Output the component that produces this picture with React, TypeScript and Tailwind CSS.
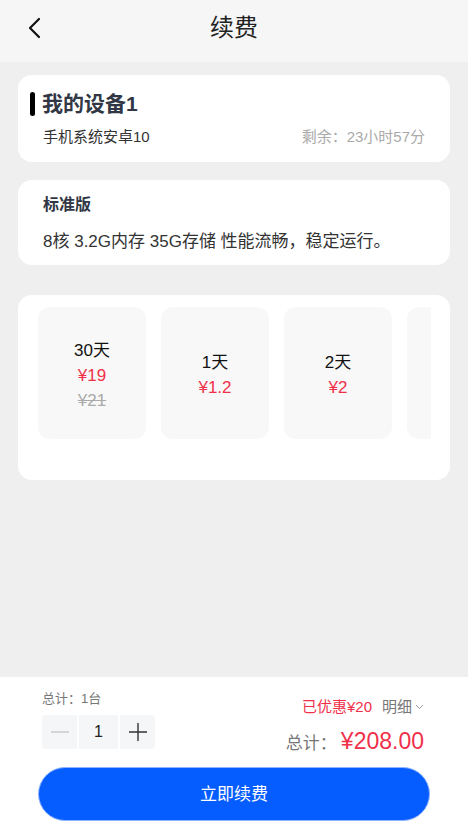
import React, { useState } from 'react';

interface Plan {
  days: string;
  price: string;
  original?: string;
}

const plans: Plan[] = [
  { days: '30天', price: '¥19', original: '¥21' },
  { days: '1天', price: '¥1.2' },
  { days: '2天', price: '¥2' },
];

const font = { fontFamily: '"Liberation Sans", "Noto Sans CJK SC", sans-serif' };

const App: React.FC = () => {
  const [count, setCount] = useState(1);

  return (
    <div className="w-[468px] h-[834px] bg-[#efefef] flex flex-col overflow-hidden" style={font}>
      {/* header */}
      <div className="h-[62px] bg-[#f6f6f6] flex items-center relative shrink-0">
        <button className="absolute left-[24px] top-[16px] w-[20px] h-[24px] flex items-center justify-center">
          <svg width="14" height="22" viewBox="0 0 14 22" fill="none">
            <path d="M12 2 L3 11 L12 20" stroke="#111" strokeWidth="2.2" strokeLinecap="round" strokeLinejoin="round" />
          </svg>
        </button>
        <h1 className="w-full text-center text-[24px] text-[#222] leading-none -mt-[6px]">续费</h1>
      </div>

      <div className="flex-1 px-[18px] pt-[13px] flex flex-col gap-[18px]">
        {/* device card */}
        <div className="bg-white rounded-[14px] h-[87px] pl-[12px] pr-[25px] pt-[15px]">
          <div className="flex items-center gap-[7px]">
            <span className="w-[5px] h-[24px] bg-black rounded-full" />
            <span className="text-[21px] font-bold text-[#313745] leading-[28px]">我的设备1</span>
          </div>
          <div className="flex justify-between items-center mt-[9px] pl-[13px] text-[15px] leading-[20px]">
            <span className="text-[#333]">手机系统安卓10</span>
            <span className="text-[#aaa]">剩余：23小时57分</span>
          </div>
        </div>

        {/* version card */}
        <div className="bg-white rounded-[14px] h-[85px] px-[25px] pt-[14px]">
          <div className="text-[16px] font-bold text-[#313745] leading-[22px]">标准版</div>
          <div className="text-[17px] text-[#333] leading-[22px] mt-[15px]">8核 3.2G内存 35G存储 性能流畅，稳定运行。</div>
        </div>

        {/* plans card */}
        <div className="bg-white rounded-[14px] h-[185px] mt-[12px] pl-[20px] pr-[18px] pt-[12px]">
          <div className="flex gap-[15px] overflow-hidden w-[393px]">
            {plans.map((p, i) => (
              <div
                key={i}
                className="w-[108px] h-[132px] shrink-0 bg-[#f8f8f8] rounded-[12px] flex flex-col items-center justify-center pt-[4px] text-[17px] leading-[25px]"
              >
                <span className="text-[#111]">{p.days}</span>
                <span className="text-[#f0304a]">{p.price}</span>
                {p.original && <span className="text-[#aaa] line-through">{p.original}</span>}
              </div>
            ))}
            <div className="w-[108px] h-[132px] shrink-0 bg-[#f8f8f8] rounded-[12px]" />
          </div>
        </div>
      </div>

      {/* bottom bar */}
      <div className="bg-white h-[157px] shrink-0 px-[38px] pt-[12px]">
        <div className="flex justify-between">
          <div className="pl-[4px]">
            <div className="text-[13px] text-[#777] leading-[20px]">总计：1台</div>
            <div className="flex gap-[2px] mt-[6px]">
              <button
                onClick={() => setCount(Math.max(1, count - 1))}
                className="w-[35px] h-[34px] bg-[#f5f6f8] rounded-l-[4px] flex items-center justify-center"
              >
                <svg width="18" height="2" viewBox="0 0 18 2"><path d="M0 1 H18" stroke="#c8c8c8" strokeWidth="1.4" /></svg>
              </button>
              <div className="w-[39px] h-[34px] bg-[#f5f6f8] flex items-center justify-center text-[16px] text-[#222]">{count}</div>
              <button
                onClick={() => setCount(count + 1)}
                className="w-[35px] h-[34px] bg-[#f5f6f8] rounded-r-[4px] flex items-center justify-center"
              >
                <svg width="18" height="18" viewBox="0 0 18 18"><path d="M0 9 H18 M9 0 V18" stroke="#333" strokeWidth="1.4" /></svg>
              </button>
            </div>
          </div>
          <div className="flex flex-col items-end pr-[6px] pt-[8px]">
            <div className="flex items-center text-[15px] leading-[20px]">
              <span className="text-[#f0304a]">已优惠¥20</span>
              <span className="text-[#777] ml-[10px]">明细</span>
              <svg className="ml-[3px]" width="9" height="6" viewBox="0 0 9 6" fill="none">
                <path d="M1 1 L4.5 4.5 L8 1" stroke="#999" strokeWidth="1" />
              </svg>
            </div>
            <div className="flex items-baseline mt-[7px]">
              <span className="text-[17px] text-[#777]">总计：</span>
              <span className="text-[23px] text-[#f0304a] ml-[4px]">¥208.00</span>
            </div>
          </div>
        </div>
        <button className="mt-[8px] w-[392px] h-[54px] rounded-full bg-[#055cff] border border-[#8fb4ff] text-white text-[17px] pt-[3px]">
          立即续费
        </button>
      </div>
    </div>
  );
};

export default App;
